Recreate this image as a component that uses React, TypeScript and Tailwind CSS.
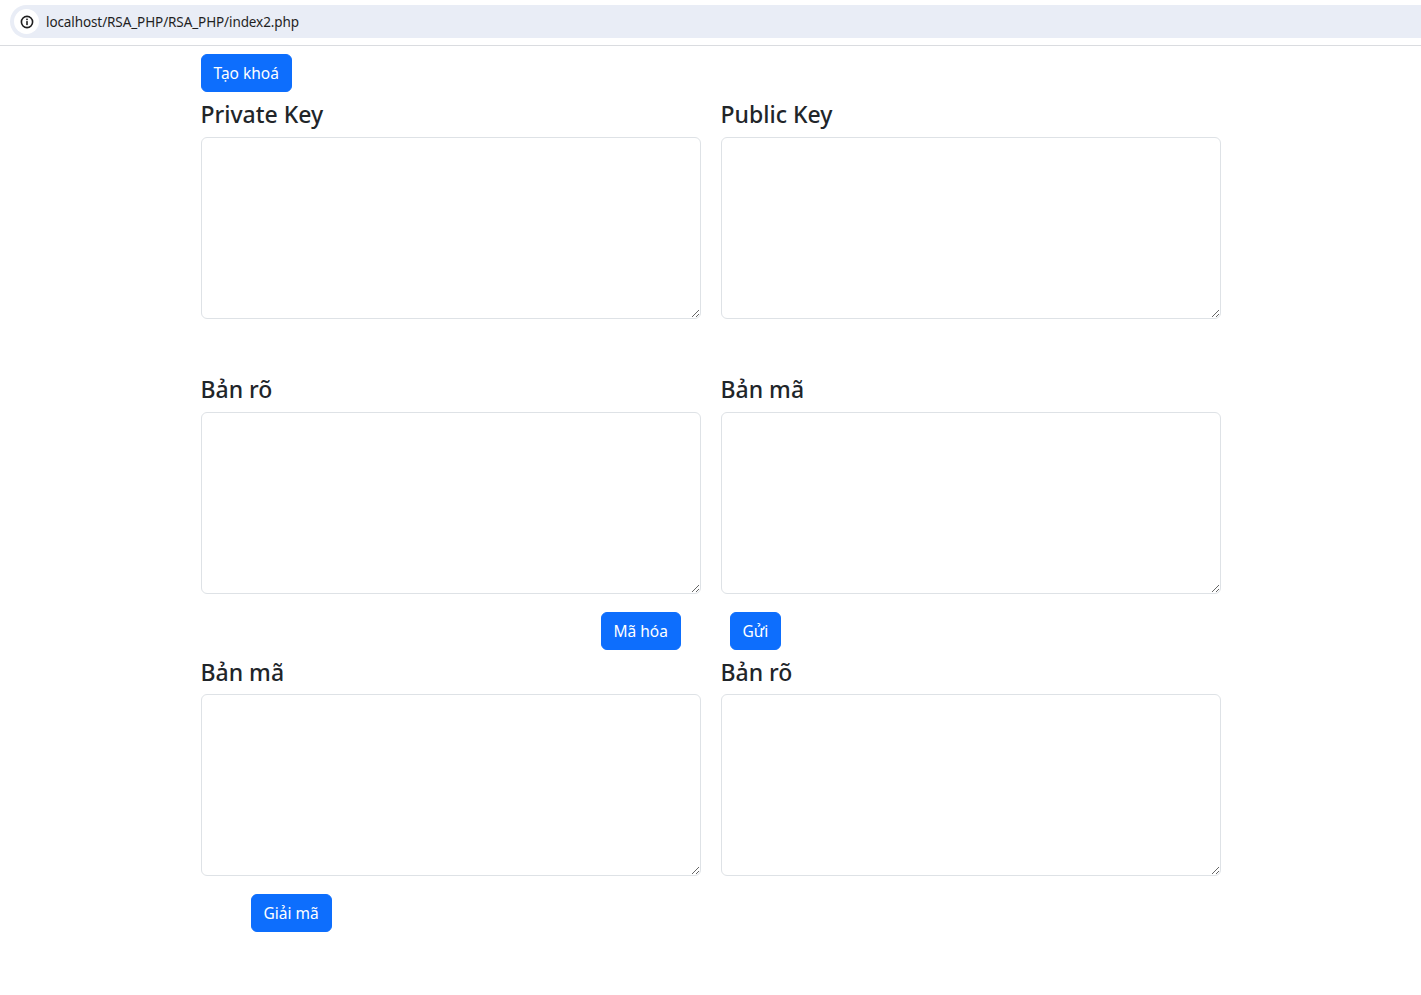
import React from "react";

function InfoIcon() {
  return (
    <svg width="14" height="14" viewBox="0 0 14 14">
      <circle cx="7" cy="7" r="5.6" fill="none" stroke="#1f1f1f" strokeWidth="1.6" />
      <rect x="6.2" y="6.1" width="1.6" height="4" fill="#1f1f1f" />
      <rect x="6.2" y="3.6" width="1.6" height="1.6" fill="#1f1f1f" />
    </svg>
  );
}

function Btn({ children, className = "" }: { children: React.ReactNode; className?: string }) {
  return (
    <button
      className={
        "h-[38px] px-3 rounded-md bg-[#0d6efd] text-white text-[15.5px] leading-[24px] border border-[#0d6efd] " +
        className
      }
    >
      {children}
    </button>
  );
}

function Field({ title }: { title: string }) {
  return (
    <div className="flex flex-col">
      <h4 className="text-[23px] leading-[28.8px] font-medium text-[#212529] mb-2 pt-[2px] -mt-[2px]">{title}</h4>
      <textarea className="block w-[500px] h-[182px] border border-[#dee2e6] rounded-md bg-white outline-none resize-y" />
    </div>
  );
}

export default function App() {
  return (
    <div className="min-h-[995px] bg-white" style={{ fontFamily: '"Noto Sans", "Open Sans", sans-serif' }}>
      <div className="h-[46px] border-b border-[#dadce0] bg-white pt-[5px] pl-[10px]">
        <div className="h-[33px] bg-[#e9edf6] rounded-l-full flex items-center pl-[4px]">
          <div className="w-[25px] h-[25px] rounded-full bg-white flex items-center justify-center">
            <InfoIcon />
          </div>
          <span className="ml-[7px] mt-[1px] text-[13.5px] text-[#1f1f1f] tracking-[-0.1px]">
            localhost/RSA_PHP/RSA_PHP/index2.php
          </span>
        </div>
      </div>
      <div className="w-[1020px] mx-auto text-[#212529]">
        <Btn className="mt-2">Tạo khoá</Btn>
        <div className="grid grid-cols-2 gap-x-5 mt-2">
          <Field title="Private Key" />
          <Field title="Public Key" />
        </div>
        <div className="grid grid-cols-2 gap-x-5 mt-[56px]">
          <Field title="Bản rõ" />
          <Field title="Bản mã" />
        </div>
        <div className="grid grid-cols-2 gap-x-5 mt-[18px]">
          <div className="flex">
            <Btn className="ml-[400px]">Mã hóa</Btn>
          </div>
          <div className="flex">
            <Btn className="ml-[9px]">Gửi</Btn>
          </div>
        </div>
        <div className="grid grid-cols-2 gap-x-5 mt-[8px]">
          <Field title="Bản mã" />
          <Field title="Bản rõ" />
        </div>
        <div className="mt-[18px]">
          <Btn className="ml-[50px]">Giải mã</Btn>
        </div>
      </div>
    </div>
  );
}
